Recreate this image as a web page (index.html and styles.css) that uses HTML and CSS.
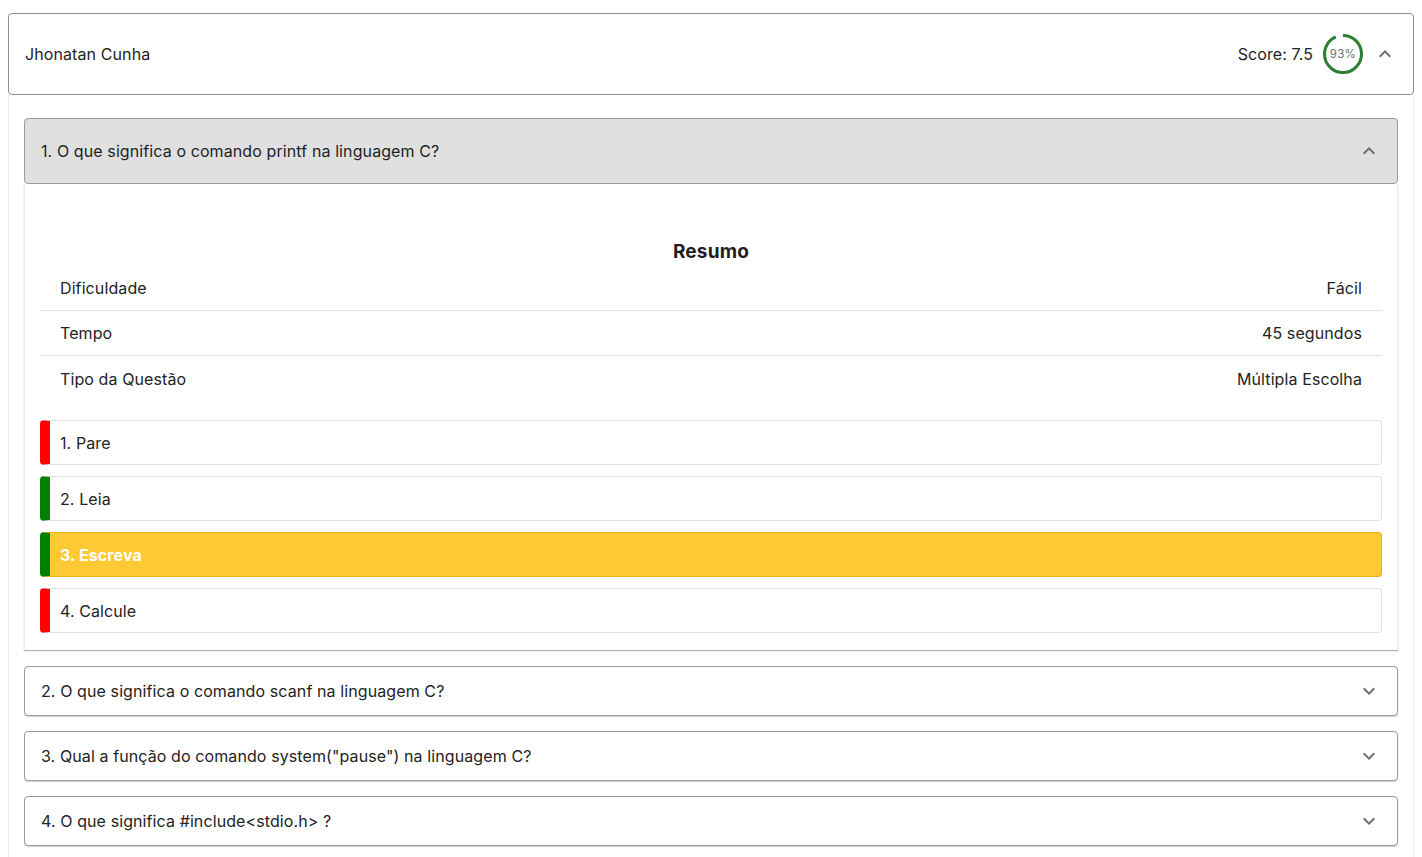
FILE: index.html
```html
<!DOCTYPE html>
<html lang="pt">
<head>
<meta charset="utf-8">
<title>Resultado</title>
<link rel="stylesheet" href="styles.css">
</head>
<body>
<div class="page">
  <section class="student">
    <header class="student-head">
      <span class="student-name">Jhonatan Cunha</span>
      <div class="student-meta">
        <span class="score">Score: 7.5</span>
        <div class="progress">
          <svg width="40" height="40" viewBox="0 0 40 40">
            <circle cx="20" cy="20" r="18.5" fill="none" stroke="#2e7d32" stroke-width="3" stroke-dasharray="108.1 200" transform="rotate(-90 20 20)"/>
          </svg>
          <span class="progress-label">93%</span>
        </div>
        <svg class="chev" width="24" height="24" viewBox="0 0 24 24"><path d="M12 8l-6 6 1.41 1.41L12 10.83l4.59 4.58L18 14z"/></svg>
      </div>
    </header>
    <div class="student-body">
      <article class="question open">
        <div class="q-head">
          <span>1. O que significa o comando printf na linguagem C?</span>
          <svg class="chev" width="24" height="24" viewBox="0 0 24 24"><path d="M12 8l-6 6 1.41 1.41L12 10.83l4.59 4.58L18 14z"/></svg>
        </div>
        <div class="q-body">
          <h3 class="summary-title">Resumo</h3>
          <div class="summary">
            <div class="row"><span>Dificuldade</span><span>Fácil</span></div>
            <div class="row"><span>Tempo</span><span>45 segundos</span></div>
            <div class="row"><span>Tipo da Questão</span><span>Múltipla Escolha</span></div>
          </div>
          <div class="options">
            <div class="option wrong">1. Pare</div>
            <div class="option right">2. Leia</div>
            <div class="option right selected">3. Escreva</div>
            <div class="option wrong">4. Calcule</div>
          </div>
        </div>
      </article>
      <article class="question">
        <div class="q-head">
          <span>2. O que significa o comando scanf na linguagem C?</span>
          <svg class="chev" width="24" height="24" viewBox="0 0 24 24"><path d="M16.59 8.59L12 13.17 7.41 8.59 6 10l6 6 6-6z"/></svg>
        </div>
      </article>
      <article class="question">
        <div class="q-head">
          <span>3. Qual a função do comando system("pause") na linguagem C?</span>
          <svg class="chev" width="24" height="24" viewBox="0 0 24 24"><path d="M16.59 8.59L12 13.17 7.41 8.59 6 10l6 6 6-6z"/></svg>
        </div>
      </article>
      <article class="question">
        <div class="q-head">
          <span>4. O que significa #include&lt;stdio.h&gt; ?</span>
          <svg class="chev" width="24" height="24" viewBox="0 0 24 24"><path d="M16.59 8.59L12 13.17 7.41 8.59 6 10l6 6 6-6z"/></svg>
        </div>
      </article>
    </div>
  </section>
</div>
</body>
</html>
```

FILE: styles.css
```css
* { box-sizing: border-box; }
html, body { margin: 0; background: #fff; }
body {
  font-family: Inter, "Noto Sans", sans-serif;
  font-size: 16px;
  letter-spacing: 0.1px;
  color: #232323;
  overflow: hidden;
}
.page { padding: 13px 8px 0 8px; }

.student-head {
  height: 82px;
  border: 1px solid #8f8f8f;
  border-radius: 4px;
  padding: 0 16px;
  display: flex;
  align-items: center;
  justify-content: space-between;
  background: #fff;
}
.student-meta { display: flex; align-items: center; }
.score { margin-right: 10px; }
.progress {
  position: relative;
  width: 40px;
  height: 40px;
  margin-right: 10px;
}
.progress svg { display: block; }
.progress-label {
  position: absolute;
  inset: 0;
  display: flex;
  align-items: center;
  justify-content: center;
  font-size: 11.5px;
  letter-spacing: 0.3px;
  color: #707070;
}
.chev { display: block; fill: #6f6f6f; flex: none; }

.student-body {
  border-left: 1px solid #ececec;
  border-right: 1px solid #ececec;
  padding: 23px 15px 20px 15px;
  display: flex;
  flex-direction: column;
  gap: 15px;
}

.question.open { margin-bottom: 1px; }
.q-head {
  height: 50px;
  border: 1px solid #9a9a9a;
  border-radius: 4px;
  padding: 0 16px;
  display: flex;
  align-items: center;
  justify-content: space-between;
  background: #fff;
  box-shadow: 0 1px 1px rgba(0,0,0,0.18);
}
.open .q-head {
  height: 66px;
  background: #e0e0e0;
  box-shadow: none;
}
.q-body {
  border-left: 1px solid #ececec;
  border-right: 1px solid #ececec;
  padding: 54px 15px 17px 15px;
  box-shadow: 0 1px 1px rgba(0,0,0,0.3);
}
.summary-title {
  margin: 0;
  text-align: center;
  font-size: 19px;
  font-weight: 700;
  line-height: 28px;
  letter-spacing: 0.2px;
  color: #1f1f1f;
}
.row {
  height: 45px;
  display: flex;
  align-items: center;
  justify-content: space-between;
  padding: 0 20px;
  border-bottom: 1px solid #e0e0e0;
}
.row:last-child { border-bottom: 0; }

.options {
  margin-top: 19px;
  display: flex;
  flex-direction: column;
  gap: 11px;
}
.option {
  height: 45px;
  display: flex;
  align-items: center;
  padding-left: 10px;
  border: 1px solid #e0e0e0;
  border-radius: 4px;
  border-left-width: 10px;
}
.option.wrong { border-left-color: #ff0000; }
.option.right { border-left-color: #008000; }
.option.selected {
  background: #ffc933;
  border-top-color: #ebb21f;
  border-right-color: #ebb21f;
  border-bottom-color: #ebb21f;
  color: #fff;
  font-weight: 700;
}
```
